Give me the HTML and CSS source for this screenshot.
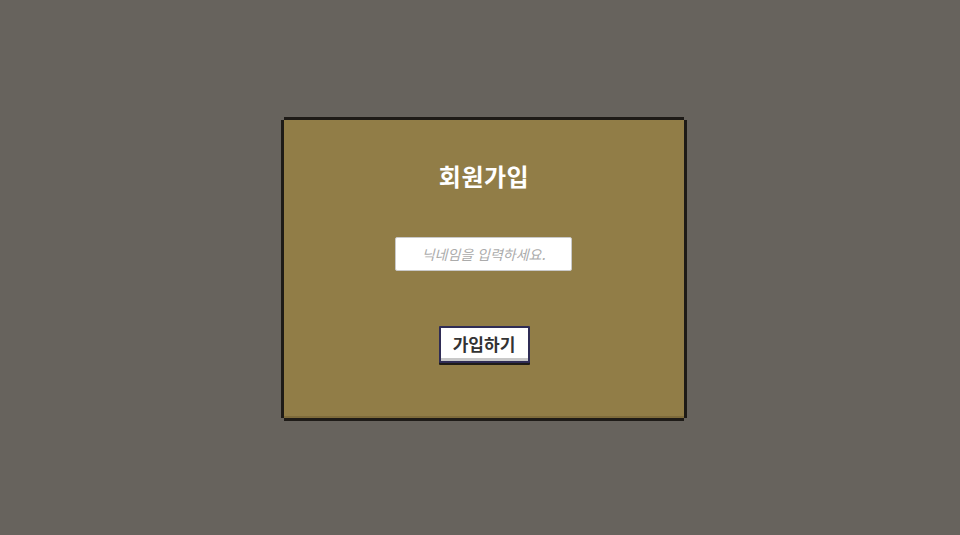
FILE: index.html
```html
<!DOCTYPE html>
<html lang="ko">
<head>
<meta charset="utf-8">
<link rel="stylesheet" href="styles.css">
</head>
<body>
<div class="page">
  <div class="card">
    <h1 class="title">회원가입</h1>
    <input class="nick" type="text" placeholder="닉네임을 입력하세요.">
    <button class="join" type="button">가입하기</button>
  </div>
</div>
</body>
</html>
```
FILE: styles.css
```css
html, body {
  margin: 0;
  padding: 0;
  background: #67635d;
  width: 960px;
  height: 535px;
  overflow: hidden;
  font-family: "Noto Sans CJK KR", "Noto Sans", sans-serif;
}
.page {
  padding: 120px 0 0 284px;
}
.card {
  width: 400px;
  height: 298px;
  background: #917d47;
  box-shadow:
    inset 0 -2px 0 0 #7e6b3b,
    3px 0 0 0 #1e1b17,
    -3px 0 0 0 #1e1b17,
    0 3px 0 0 #1e1b17,
    0 -3px 0 0 #1e1b17;
  display: flex;
  flex-direction: column;
  align-items: center;
  box-sizing: border-box;
  padding-top: 38px;
}
.title {
  margin: 0;
  font-size: 24px;
  font-weight: 700;
  color: #ffffff;
  line-height: 36px;
  letter-spacing: 0.5px;
}
.nick {
  margin-top: 43px;
  margin-left: -1px;
  width: 177px;
  height: 34px;
  box-sizing: border-box;
  border: 1px solid #c9c9c9;
  border-radius: 2px;
  background: #fff;
  font-family: "Noto Sans CJK KR", "Noto Sans", sans-serif;
  font-size: 14px;
  text-align: center;
  padding: 0;
}
.nick::placeholder {
  color: #ababab;
  font-style: italic;
}
.join {
  margin-top: 55px;
  width: 91px;
  height: 37px;
  box-sizing: border-box;
  background: #fff;
  border: 2px solid #2f2c55;
  box-shadow: inset 0 -3px 0 0 #c8c8c8, 0 2px 0 0 #1e1b17;
  font-family: "Noto Sans CJK KR", "Noto Sans", sans-serif;
  font-size: 17px;
  font-weight: 700;
  color: #333;
  padding: 0 0 3px;
  border-radius: 1px;
}
```
